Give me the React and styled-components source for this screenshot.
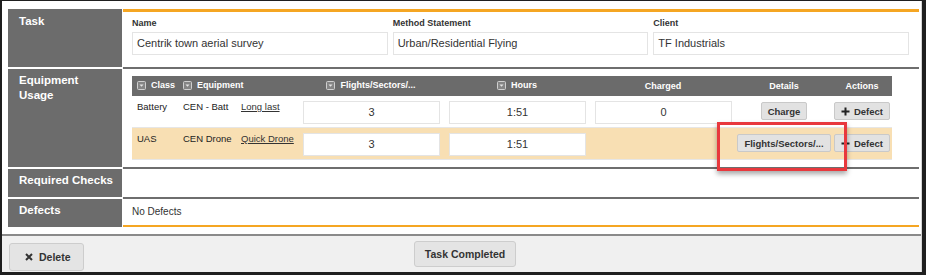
import styled, { createGlobalStyle } from 'styled-components';

const GlobalStyle = createGlobalStyle`
  html, body {
    margin: 0;
    padding: 0;
    background: #1f1f1f;
    font-family: "Liberation Sans", Arial, sans-serif;
  }
`;

const Frame = styled.div`
  position: relative;
  margin: 1px 4px 0 2px;
  height: 271px;
  background: #fff;
  display: flex;
  flex-direction: column;
  overflow: hidden;
  border-right: 1px solid #d6d6d6;
  box-sizing: border-box;
`;

const Sections = styled.div`
  display: grid;
  grid-template-columns: 114px 1fr;
  column-gap: 1px;
  padding: 8px 2px 0 6px;
`;

const Label = styled.div`
  background: #6c6c6c;
  color: #fff;
  font-weight: bold;
  font-size: 11.5px;
  line-height: 15px;
  white-space: nowrap;
  padding: ${(p) => (p.$first ? '5px' : '4px')} 4px 0 11px;
  border-top: ${(p) => (p.$first ? 'none' : '2px solid #fff')};
`;

const Content = styled.div`
  border-top: ${(p) => (p.$first ? '3px solid #f5a623' : '2px solid #6e6e6e')};
  border-bottom: ${(p) => (p.$last ? '2px solid #f5a623' : 'none')};
  padding: ${(p) => p.$pad || '0 10px 0 9px'};
  height: ${(p) => (p.$h ? `${p.$h}px` : 'auto')};
  box-sizing: content-box;
  color: #333;
  font-size: 10px;
  line-height: 13px;
`;

const FieldGrid = styled.div`
  display: grid;
  grid-template-columns: repeat(3, 1fr);
  column-gap: 5px;
`;

const FieldLabel = styled.div`
  font-size: 9px;
  font-weight: bold;
  line-height: 11px;
  color: #333;
  margin-bottom: 3px;
`;

const TextBox = styled.div`
  height: 23px;
  box-sizing: border-box;
  border: 1px solid #e4e4e4;
  padding: 0 4px;
  display: flex;
  align-items: center;
  font-size: 11px;
  color: #333;
`;

const Table = styled.table`
  width: 760px;
  table-layout: fixed;
  border-collapse: collapse;
  font-size: 9.5px;
  color: #222;
`;

const Th = styled.th`
  background: #6b6b6b;
  color: #fff;
  font-weight: bold;
  font-size: 9px;
  height: 20px;
  padding: 0 5px;
  text-align: ${(p) => p.$align || 'center'};
  white-space: nowrap;
`;

const HeadInner = styled.span`
  display: inline-flex;
  align-items: center;
  gap: 5px;
`;

const Tr = styled.tr`
  background: ${(p) => (p.$alt ? '#f8dfb3' : '#fff')};
  border-bottom: 1px solid #e6e6e6;
`;

const Td = styled.td`
  vertical-align: top;
  height: 23px;
  padding: ${(p) => p.$pad || '4px 4px 0 5px'};
  line-height: 13px;
  text-align: ${(p) => p.$align || 'left'};
  white-space: nowrap;
`;

const EquipName = styled.span`
  display: inline-block;
  width: 58px;
`;

const LinkText = styled.span`
  text-decoration: underline;
  color: #333;
`;

const NumBox = styled.div`
  height: 23px;
  box-sizing: border-box;
  background: #fff;
  border: 1px solid #e4e4e4;
  display: flex;
  align-items: center;
  justify-content: center;
  font-size: 11px;
  color: #333;
`;

const SmallButton = styled.button`
  height: 18px;
  padding: 0 6px;
  background: #e2e2e2;
  border: 1px solid #c9c9c9;
  border-radius: 2px;
  font-family: inherit;
  font-size: 9.5px;
  font-weight: bold;
  color: #333;
  display: inline-flex;
  align-items: center;
  gap: 4px;
  cursor: pointer;
`;

const Highlight = styled.div`
  position: absolute;
  left: 715px;
  top: 121px;
  width: 130px;
  height: 49px;
  box-sizing: border-box;
  border: 3px solid #e8383d;
  box-shadow: 0 3px 5px rgba(0, 0, 0, 0.35);
  pointer-events: none;
`;

const Footer = styled.div`
  flex: 1;
  margin-top: 7px;
  border-top: 2px solid #8a8a8a;
  background: #f0f0f0;
  display: grid;
  grid-template-columns: 1fr auto 1fr;
  align-items: start;
  padding: 5px 7px 0;
`;

const FooterButton = styled.button`
  height: ${(p) => p.$h}px;
  margin-top: ${(p) => p.$top || 0}px;
  margin-left: ${(p) => p.$left || 0}px;
  padding: ${(p) => p.$pad};
  background: #e4e4e4;
  border: 1px solid #cdcdcd;
  border-radius: 3px;
  font-family: inherit;
  font-size: 10.5px;
  font-weight: bold;
  color: #333;
  justify-self: ${(p) => p.$justify || 'center'};
  display: inline-flex;
  align-items: center;
  gap: 6px;
  cursor: pointer;
`;

const DropIcon = () => (
  <svg width="9" height="9" viewBox="0 0 9 9">
    <rect x="0.5" y="0.5" width="8" height="8" rx="1" fill="#858585" stroke="#cfcfcf" />
    <path d="M2.5 3.5 L6.5 3.5 L4.5 5.8 Z" fill="#e6e6e6" />
  </svg>
);

const PlusIcon = () => (
  <svg width="9" height="9" viewBox="0 0 9 9">
    <path d="M4.5 0.5 V8.5 M0.5 4.5 H8.5" stroke="#222" strokeWidth="2" />
  </svg>
);

const CrossIcon = () => (
  <svg width="8" height="8" viewBox="0 0 8 8">
    <path d="M1 1 L7 7 M7 1 L1 7" stroke="#333" strokeWidth="2" />
  </svg>
);

const colWidths = [46, 120, 146, 146, 146, 96, 60];

const rows = [
  { cls: 'Battery', equip: 'CEN - Batt', name: 'Long last', flights: '3', hours: '1:51', charged: '0', detail: 'Charge' },
  { cls: 'UAS', equip: 'CEN Drone', name: 'Quick Drone', flights: '3', hours: '1:51', charged: null, detail: 'Flights/Sectors/...', alt: true },
];

const App = () => {
  return (
    <>
      <GlobalStyle />
      <Frame>
        <Sections>
          <Label $first>Task</Label>
          <Content $first $pad="6px 10px 12px 9px">
            <FieldGrid>
              <div>
                <FieldLabel>Name</FieldLabel>
                <TextBox>Centrik town aerial survey</TextBox>
              </div>
              <div>
                <FieldLabel>Method Statement</FieldLabel>
                <TextBox>Urban/Residential Flying</TextBox>
              </div>
              <div>
                <FieldLabel>Client</FieldLabel>
                <TextBox>TF Industrials</TextBox>
              </div>
            </FieldGrid>
          </Content>

          <Label>Equipment<br />Usage</Label>
          <Content $pad="7px 10px 7px 9px">
            <Table>
              <colgroup>
                {colWidths.map((w, i) => (
                  <col key={i} style={{ width: w }} />
                ))}
              </colgroup>
              <thead>
                <tr>
                  <Th $align="left"><HeadInner><DropIcon />Class</HeadInner></Th>
                  <Th $align="left"><HeadInner><DropIcon />Equipment</HeadInner></Th>
                  <Th><HeadInner><DropIcon />Flights/Sectors/...</HeadInner></Th>
                  <Th><HeadInner><DropIcon />Hours</HeadInner></Th>
                  <Th>Charged</Th>
                  <Th>Details</Th>
                  <Th>Actions</Th>
                </tr>
              </thead>
              <tbody>
                {rows.map((r) => (
                  <Tr key={r.cls} $alt={r.alt}>
                    <Td>{r.cls}</Td>
                    <Td>
                      <EquipName>{r.equip}</EquipName>
                      <LinkText>{r.name}</LinkText>
                    </Td>
                    <Td $pad="5px 4px 3px 5px"><NumBox>{r.flights}</NumBox></Td>
                    <Td $pad="5px 4px 3px 5px"><NumBox>{r.hours}</NumBox></Td>
                    <Td $pad="5px 4px 3px 5px">{r.charged !== null && <NumBox>{r.charged}</NumBox>}</Td>
                    <Td $pad="6px 0 0" $align="center"><SmallButton>{r.detail}</SmallButton></Td>
                    <Td $pad="6px 0 0" $align="center"><SmallButton><PlusIcon />Defect</SmallButton></Td>
                  </Tr>
                ))}
              </tbody>
            </Table>
          </Content>

          <Label>Required Checks</Label>
          <Content $h={28} />

          <Label>Defects</Label>
          <Content $last $h={20} $pad="6px 10px 0 9px">No Defects</Content>
        </Sections>

        <Footer>
          <FooterButton $h={28} $pad="0 12px 0 15px" $top={2} $justify="start"><CrossIcon />Delete</FooterButton>
          <FooterButton $h={26} $pad="0 10px" $left={7}>Task Completed</FooterButton>
          <span />
        </Footer>

        <Highlight />
      </Frame>
    </>
  );
};

export default App;
